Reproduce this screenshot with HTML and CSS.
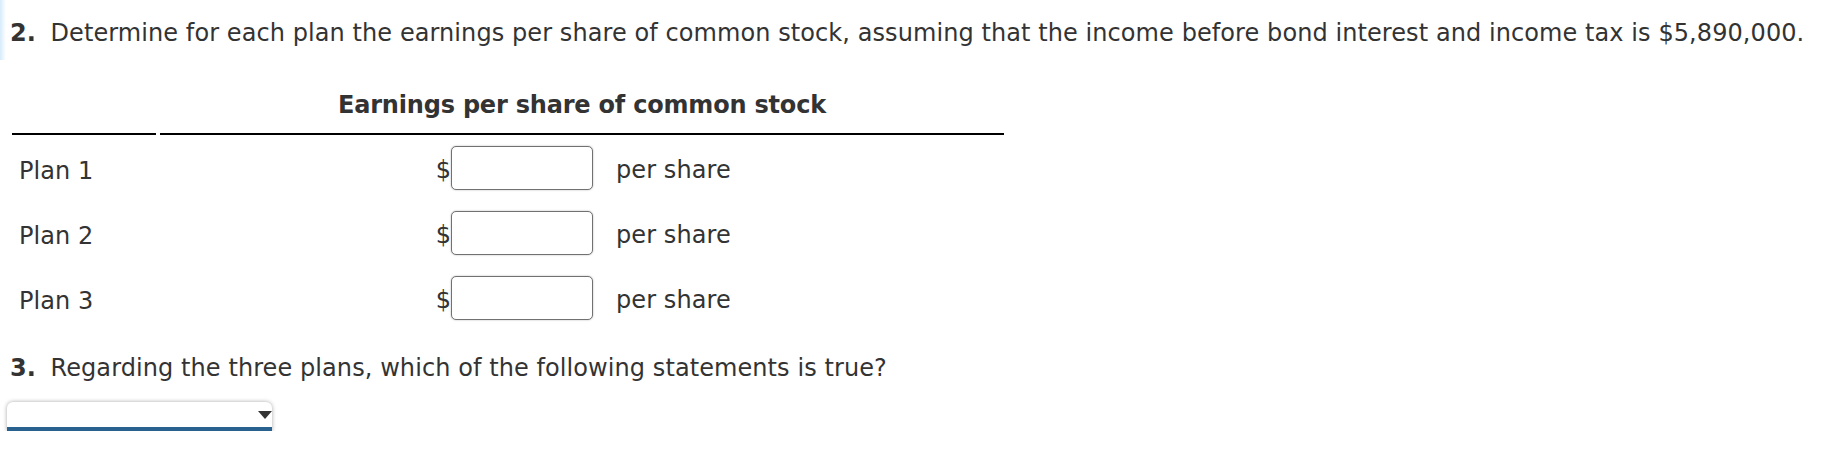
FILE: index.html
```html
<!DOCTYPE html>
<html lang="en">
<head>
<meta charset="utf-8">
<title>Earnings per share</title>
<link rel="stylesheet" href="styles.css">
</head>
<body>
<div class="page">
  <p class="q"><span class="num">2.</span> Determine for each plan the earnings per share of common stock, assuming that the income before bond interest and income tax is $5,890,000.</p>

  <div class="eps">
    <div class="hd-blank"></div>
    <div class="hd">Earnings per share of common stock</div>

    <div class="plan">Plan 1</div>
    <div class="cur">$</div>
    <div class="inp"><input type="text" class="field" aria-label="Plan 1 earnings per share"></div>
    <div class="unit">per share</div>

    <div class="plan">Plan 2</div>
    <div class="cur">$</div>
    <div class="inp"><input type="text" class="field" aria-label="Plan 2 earnings per share"></div>
    <div class="unit">per share</div>

    <div class="plan">Plan 3</div>
    <div class="cur">$</div>
    <div class="inp"><input type="text" class="field" aria-label="Plan 3 earnings per share"></div>
    <div class="unit">per share</div>
  </div>

  <p class="q q3"><span class="num">3.</span> Regarding the three plans, which of the following statements is true?</p>

  <div class="select" role="combobox" aria-label="Statement"><span class="arrow"></span></div>
</div>
</body>
</html>
```

FILE: styles.css
```css
html, body {
  margin: 0;
  padding: 0;
}

body {
  font-family: "DejaVu Sans", Verdana, sans-serif;
  font-size: 24px;
  line-height: 27px;
  letter-spacing: 0.08px;
  color: #333;
  background: #fff linear-gradient(to right, #d6ebfb 0, #ffffff 6px) no-repeat 0 0 / 6px 60px;
}

.page {
  padding-top: 20px;
}

.q {
  margin: 0 0 0 10px;
}

.num {
  font-weight: bold;
  letter-spacing: 0;
  margin-right: 7px;
}

.eps {
  display: grid;
  grid-template-columns: 148px 291px 142px 411px;
  grid-template-rows: auto repeat(3, 65px);
  align-items: center;
  margin: 45px 0 0 12px;
}

.hd-blank {
  align-self: end;
  margin-right: 4px;
  border-bottom: 2px solid #000;
}

.hd {
  grid-column: 2 / 5;
  text-align: center;
  font-weight: bold;
  letter-spacing: -0.2px;
  padding-bottom: 14px;
  border-bottom: 2px solid #000;
}

.plan {
  padding: 7px 0 0 7px;
}

.cur {
  text-align: right;
  padding-top: 6px;
}

.inp {
  display: flex;
}

.field {
  display: block;
  box-sizing: border-box;
  width: 142px;
  height: 44px;
  margin: 0;
  padding: 0 6px;
  border: 1px solid #717171;
  border-radius: 5px;
  box-shadow: 0 0 2px rgba(0, 0, 0, 0.3);
  background: #fff;
  font: inherit;
}

.unit {
  padding: 6px 0 0 23px;
}

.q3 {
  margin-top: 25px;
}

.select {
  display: flex;
  justify-content: flex-end;
  align-items: flex-start;
  box-sizing: content-box;
  width: 265px;
  height: 25px;
  margin: 20px 0 0 7px;
  background: #fff;
  border-bottom: 4px solid #29618f;
  border-radius: 6px 6px 0 0;
  box-shadow: 0 0 4px rgba(0, 0, 0, 0.35);
}

.arrow {
  width: 0;
  height: 0;
  margin-top: 9px;
  border-left: 7px solid transparent;
  border-right: 7px solid transparent;
  border-top: 8px solid #333;
}
```
